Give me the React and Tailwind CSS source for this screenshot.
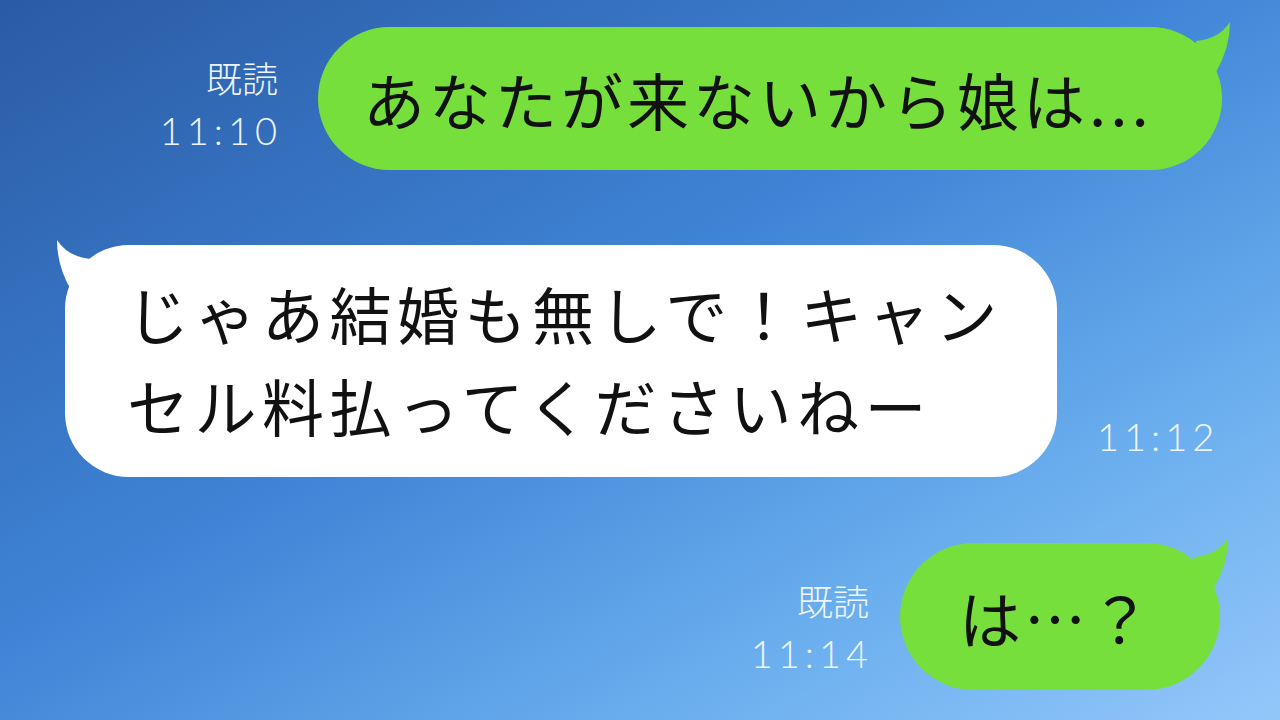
import React from "react";

const Tail = ({ color, side }) => (
  <svg
    width="60"
    height="60"
    viewBox="0 0 60 60"
    className={`absolute top-[-9px] ${side === "right" ? "right-[-12px]" : "left-[-12px] -scale-x-100"}`}
  >
    <path d="M22 23 Q45 21 56 4 Q56 30 42 54 L24 46 Z" fill={color} />
  </svg>
);

const ReadMark = ({ time, className = "" }) => (
  <div className={`flex flex-col items-end text-[#eef5ff] leading-none ${className}`}>
    <span className="text-[36px] font-['Noto_Sans_CJK_JP',sans-serif] font-light">既読</span>
    <span className="mt-[16px] text-[38px] font-['Lato',sans-serif] font-light tracking-[5px] mr-[-4px]">{time}</span>
  </div>
);

export default function App() {
  return (
    <div className="h-[720px] w-[1280px] overflow-hidden bg-[linear-gradient(to_bottom_right,#2a5ba5_0%,#3f84d6_45%,#6aaeee_75%,#93c7fa_100%)] font-['Noto_Sans_CJK_JP',sans-serif] text-[#111]">
      <div className="flex flex-col pt-[27px]">
        {/* first message */}
        <div className="flex items-center justify-end gap-[40px] pr-[58px]">
          <ReadMark time="11:10" className="pt-[10px]" />
          <div className="relative flex h-[143px] w-[904px] items-center rounded-full bg-[#77df3b] pl-[45px]">
            <Tail color="#77df3b" side="right" />
            <span className="relative text-[62px] tracking-[4px] leading-none">あなたが来ないから娘は...</span>
          </div>
        </div>

        {/* reply */}
        <div className="mt-[75px] flex items-end pl-[65px]">
          <div className="relative h-[232px] w-[992px] rounded-[64px] bg-white pl-[62px] pt-[22px]">
            <Tail color="#ffffff" side="left" />
            <p className="relative text-[62px] leading-[92px] tracking-[5.5px]">
              じゃあ結婚も無しで！キャン
              <br />
              セル料払ってくださいねー
            </p>
          </div>
          <span className="mb-[22px] ml-[40px] text-[38px] font-['Lato',sans-serif] font-light tracking-[5px] leading-none text-[#eef5ff]">
            11:12
          </span>
        </div>

        {/* last message */}
        <div className="mt-[66px] flex items-center justify-end gap-[31px] pr-[60px]">
          <ReadMark time="11:14" className="pt-[20px]" />
          <div className="relative flex h-[147px] w-[320px] items-center rounded-full bg-[#77df3b] pl-[59px]">
            <Tail color="#77df3b" side="right" />
            <span className="relative text-[62px] tracking-[3px] leading-none">は…？</span>
          </div>
        </div>
      </div>
    </div>
  );
}
